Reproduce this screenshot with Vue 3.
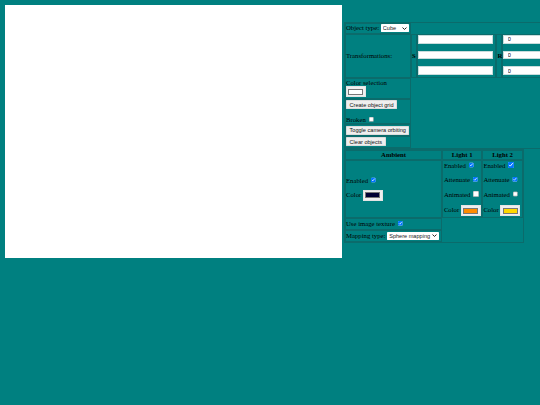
<script setup>
import { ref } from 'vue';

const objectType = ref('Cube');
const mappingType = ref('Sphere mapping');
const objectColor = ref('#ffffff');
const ambientColor = ref('#000033');

const lights = ref([
  { name: 'Light 1', color: '#ff8c00' },
  { name: 'Light 2', color: '#ffd700' },
]);
</script>

<template>
  <div class="page">
    <div class="canvas"></div>
    <div class="panel">
      <table class="controls">
        <colgroup>
          <col class="col-first" />
          <col class="col-axis" />
          <col class="col-vec" />
          <col class="col-axis" />
          <col class="col-vec" />
        </colgroup>
        <tbody>
          <tr>
            <td>
              Object type:
              <select v-model="objectType" class="type-select">
                <option>Cube</option>
                <option>Sphere</option>
              </select>
            </td>
            <td class="empty" colspan="4"></td>
          </tr>
          <tr>
            <td>Transformations:</td>
            <td class="axis">S</td>
            <td class="vec">
              <input type="text" />
              <input type="text" />
              <input type="text" />
            </td>
            <td class="axis">R</td>
            <td class="vec">
              <input type="text" value="0" />
              <input type="text" value="0" />
              <input type="text" value="0" />
            </td>
          </tr>
          <tr>
            <td>
              <div>Color selection</div>
              <input v-model="objectColor" type="color" />
            </td>
            <td class="empty" colspan="4"></td>
          </tr>
          <tr>
            <td>
              <button>Create object grid</button>
              <div class="broken">Broken <input type="checkbox" /></div>
            </td>
            <td class="empty" colspan="4"></td>
          </tr>
          <tr>
            <td><button>Toggle camera orbiting</button></td>
            <td class="empty" colspan="4"></td>
          </tr>
          <tr>
            <td><button>Clear objects</button></td>
            <td class="empty" colspan="4"></td>
          </tr>
        </tbody>
      </table>

      <table class="lighting">
        <colgroup>
          <col class="col-ambient" />
          <col class="col-light1" />
          <col class="col-light2" />
        </colgroup>
        <thead>
          <tr>
            <th>Ambient</th>
            <th v-for="l in lights" :key="l.name">{{ l.name }}</th>
          </tr>
        </thead>
        <tbody>
          <tr>
            <td>
              <div class="ambient-line">Enabled <input type="checkbox" checked /></div>
              <div class="ambient-line">Color <input v-model="ambientColor" type="color" /></div>
            </td>
            <td v-for="l in lights" :key="l.name">
              <div class="line">Enabled <input type="checkbox" checked /></div>
              <div class="line">Attenuate <input type="checkbox" checked /></div>
              <div class="line">Animated <input type="checkbox" /></div>
              <div class="line-color">Color <input v-model="l.color" type="color" /></div>
            </td>
          </tr>
          <tr>
            <td class="short">Use image texture <input type="checkbox" checked /></td>
            <td class="empty" colspan="2"></td>
          </tr>
          <tr>
            <td class="short">
              Mapping type:
              <select v-model="mappingType" class="map-select">
                <option>Sphere mapping</option>
                <option>Cube mapping</option>
              </select>
            </td>
            <td class="empty" colspan="2"></td>
          </tr>
        </tbody>
      </table>
    </div>
  </div>
</template>

<style>
html,
body {
  margin: 0;
  background: #008080;
  overflow: hidden;
}
</style>

<style scoped>
.page {
  display: flex;
  width: 540px;
  height: 405px;
  overflow: hidden;
  font-family: "Liberation Serif", serif;
  color: #000000;
}
.canvas {
  flex: none;
  width: 337px;
  height: 253px;
  margin: 5px 2px 0 5px;
  background: #ffffff;
}
/* the panel is written at full size and scaled down like the source page */
.panel {
  flex: none;
  zoom: 0.42;
  margin-left: -1px;
  padding-top: 52px;
  font-size: 16px;
}
table {
  border-collapse: separate;
  border-spacing: 2px;
  border: 1px solid #0b6b6b;
  table-layout: fixed;
}
td,
th {
  padding: 1px;
  border: 1px solid #0b6b6b;
  white-space: nowrap;
}
td.empty {
  border-color: transparent;
}
.controls {
  width: 570px;
}
.col-first {
  width: 153px;
}
.col-axis {
  width: 13px;
}
.col-vec {
  width: 184px;
}
.axis {
  padding: 0;
  font-weight: bold;
  text-align: center;
}
.vec input {
  display: block;
  box-sizing: border-box;
  width: 178px;
  height: 21px;
  margin: 0 0 16px;
  padding: 1px 8px;
  border: 2px solid #c8dcdc;
  background: #ffffff;
  font-family: "Liberation Sans", sans-serif;
  font-size: 13.33px;
}
.vec input:last-child {
  margin-bottom: 4px;
}
select {
  appearance: none;
  box-sizing: border-box;
  height: 19px;
  padding: 0 0 0 5px;
  border: 0;
  border-radius: 2px;
  background: #ffffff url("data:image/svg+xml,%3Csvg xmlns='http://www.w3.org/2000/svg' viewBox='0 0 10 6'%3E%3Cpath d='M1 1l4 4 4-4' fill='none' stroke='%23222' stroke-width='2'/%3E%3C/svg%3E") no-repeat right 5px center / 11px 7px;
  font-family: "Liberation Sans", sans-serif;
  font-size: 13.33px;
  color: #222222;
}
.type-select {
  width: 67px;
}
.map-select {
  width: 124px;
}
button {
  display: block;
  box-sizing: border-box;
  height: 21px;
  padding: 1px 6px;
  border: 2px solid #dcdcdc;
  border-radius: 2px;
  background: #efefef;
  font-family: "Liberation Sans", sans-serif;
  font-size: 13.33px;
  color: #111111;
}
input[type="color"] {
  box-sizing: border-box;
  width: 47px;
  height: 26px;
  padding: 0;
  border: 2px solid #e4e4e4;
  background: #efefef;
  vertical-align: middle;
}
input[type="color"]::-webkit-color-swatch-wrapper {
  padding: 3px;
}
input[type="color"]::-webkit-color-swatch {
  border: 1px solid #777777;
}
input[type="checkbox"] {
  margin: 0 3px;
  vertical-align: baseline;
}
.broken {
  margin-top: 17px;
}
.lighting {
  width: 430px;
  margin-top: 0;
}
.col-ambient {
  width: 228px;
}
.col-light1 {
  width: 92px;
}
.col-light2 {
  width: 96px;
}
th {
  text-align: center;
}
.short {
  height: 22px;
}
.ambient-line {
  margin: 14px 0;
}
.line {
  margin: 2px 0 18px;
}
.line-color {
  margin-top: 12px;
}
</style>
